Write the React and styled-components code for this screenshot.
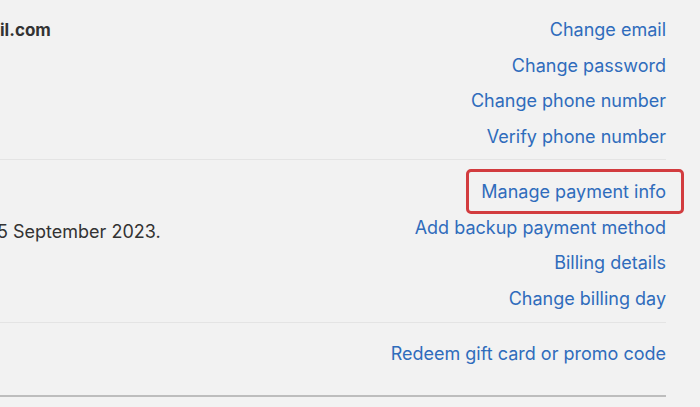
import styled, { createGlobalStyle } from "styled-components";

const GlobalStyle = createGlobalStyle`
  html, body {
    margin: 0;
    padding: 0;
    background: #f2f2f2;
    overflow: hidden;
  }
  body {
    font-family: Inter, "Noto Sans", sans-serif;
  }
`;

const Page = styled.div`
  width: 700px;
  height: 407px;
  padding-right: 34px;
  box-sizing: border-box;
  background: #f2f2f2;
`;

const Section = styled.section`
  display: flex;
  justify-content: space-between;
  align-items: flex-start;
  padding: ${(p) => p.$top ?? 12}px 0 ${(p) => p.$bottom ?? 4}px;
  border-bottom: ${(p) => (p.$strong ? "2px solid #bdbdbd" : "1px solid #e4e4e4")};
`;

const Info = styled.div`
  margin-top: ${(p) => p.$offset || 0}px;
  margin-left: ${(p) => p.$shift || 0}px;
  font-size: ${(p) => (p.$bold ? 17 : 18)}px;
  line-height: 36px;
  color: #333;
  font-weight: ${(p) => (p.$bold ? 700 : 400)};
  white-space: nowrap;
`;

const Links = styled.div`
  display: flex;
  flex-direction: column;
  align-items: flex-end;
`;

const Link = styled.a`
  position: relative;
  font-size: 18px;
  line-height: 35.7px;
  color: #2f6cbc;
  text-decoration: none;
  cursor: pointer;
  white-space: nowrap;

  ${(p) =>
    p.$highlight &&
    `
    &::after {
      content: "";
      position: absolute;
      left: -15px;
      right: -18px;
      top: -5px;
      bottom: -4px;
      border: 3px solid #d23c3f;
      border-radius: 5px;
    }
  `}
`;

const sections = [
  {
    info: "il.com",
    bold: true,
    links: ["Change email", "Change password", "Change phone number", "Verify phone number"],
  },
  {
    info: "5 September 2023.",
    offset: 40,
    shift: -3,
    top: 14,
    bottom: 5,
    links: ["Manage payment info", "Add backup payment method", "Billing details", "Change billing day"],
    highlight: "Manage payment info",
  },
  {
    links: ["Redeem gift card or promo code"],
    top: 13,
    bottom: 24,
    strong: true,
  },
];

export default function App() {
  return (
    <>
      <GlobalStyle />
      <Page>
        {sections.map((s, i) => (
          <Section key={i} $top={s.top} $bottom={s.bottom} $strong={s.strong}>
            <Info $bold={s.bold} $offset={s.offset} $shift={s.shift}>
              {s.info}
            </Info>
            <Links>
              {s.links.map((l) => (
                <Link key={l} $highlight={l === s.highlight}>
                  {l}
                </Link>
              ))}
            </Links>
          </Section>
        ))}
      </Page>
    </>
  );
}
